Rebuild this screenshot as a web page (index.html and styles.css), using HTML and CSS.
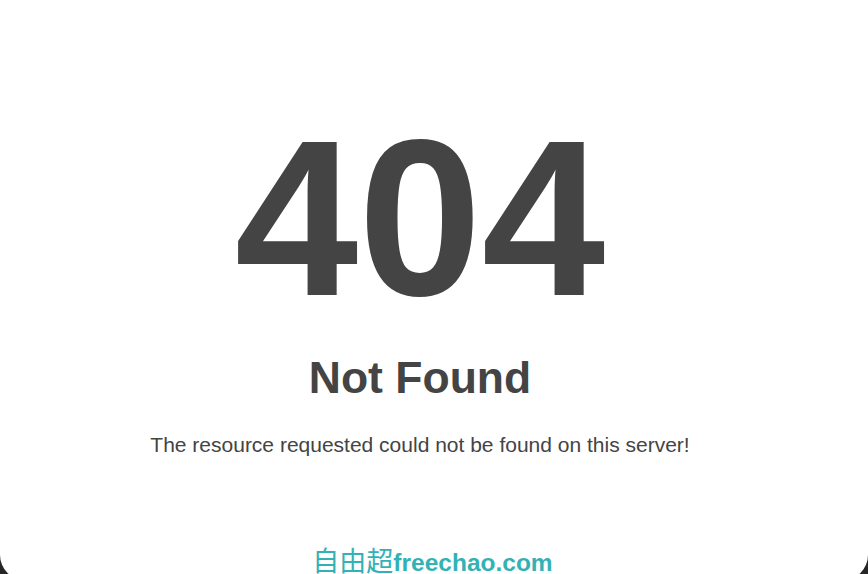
FILE: index.html
```html
<!DOCTYPE html>
<html lang="en">
<head>
<meta charset="utf-8">
<title>404 Not Found</title>
<link rel="stylesheet" href="styles.css">
</head>
<body>
<div class="card">
  <main class="content">
    <h1 class="code">404</h1>
    <h2 class="title">Not Found</h2>
    <p class="message">The resource requested could not be found on this server!</p>
  </main>
  <footer class="footer"><span class="cn">自由超</span><span class="site">freechao.com</span></footer>
</div>
</body>
</html>
```
FILE: styles.css
```css
html, body {
  margin: 0;
  padding: 0;
  height: 100%;
}
body {
  background: #262626;
  font-family: "Liberation Sans", Arial, "Noto Sans CJK SC", sans-serif;
  color: #444;
  overflow: hidden;
}
.card {
  background: #fff;
  height: 580px;
  border-radius: 0 0 25px 25px;
  display: flex;
  flex-direction: column;
  align-items: center;
}
.content {
  width: 840px;
  padding-right: 28px;
  display: flex;
  flex-direction: column;
  align-items: center;
  padding-top: 86px;
}
.code {
  margin: 0;
  font-size: 222px;
  line-height: 264px;
  font-weight: 700;
}
.title {
  margin: 0;
  font-size: 44.5px;
  line-height: 56px;
  font-weight: 700;
}
.message {
  margin: 27px 0 0;
  font-size: 21px;
  line-height: 24px;
}
.footer {
  margin-top: auto;
  margin-bottom: 3px;
  padding-right: 3px;
  color: #33b2b5;
  font-size: 24.5px;
  line-height: 28px;
}
.cn {
  font-family: "Noto Sans CJK SC", sans-serif;
  font-weight: 400;
  font-size: 27px;
}
.site {
  font-weight: 700;
}
```
